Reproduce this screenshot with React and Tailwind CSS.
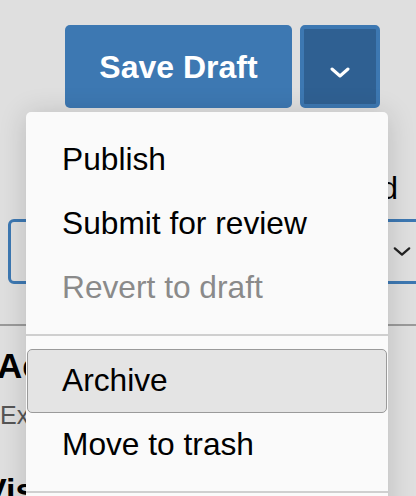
import React from 'react';

const Chevron = ({ className, color = '#fff', width = 3 }) => (
  <svg viewBox="0 0 20 11" className={className} fill="none">
    <polyline points="2,2 10,9 18,2" stroke={color} strokeWidth={width} strokeLinecap="round" strokeLinejoin="round" />
  </svg>
);

const MenuItem = ({ label, disabled, active }) => (
  <div
    className={`mx-[1px] h-[64px] flex items-center pl-[34px] rounded-[5px] border-[1.5px] text-[31.7px] ${
      active ? 'bg-[#e4e4e4] border-[#9a9a9a]' : 'border-transparent'
    } ${disabled ? 'text-[#8a8a8a]' : 'text-black'}`}
  >
    {label}
  </div>
);

export default function App() {
  return (
    <div
      className="relative w-[416px] h-[496px] overflow-hidden bg-[#dfdfdf]"
      style={{ fontFamily: '"Liberation Sans", Arial, sans-serif' }}
    >
      {/* Button group */}
      <div className="flex gap-[8px] pt-[25px] pl-[65px]">
        <button className="w-[227px] h-[83px] rounded-[5px] bg-[#3d78b2] text-white font-bold text-[32px]">
          Save Draft
        </button>
        <button className="w-[80px] h-[83px] rounded-[5px] bg-[#2f6092] border-[4px] border-[#3d78b2] flex items-center justify-center pt-[11px]">
          <Chevron className="w-[20px] h-[11px]" />
        </button>
      </div>

      {/* Page content behind the menu */}
      <div className="flex justify-end pr-[18px] mt-[62px] text-[32px] text-black leading-[36px]">
        Published
      </div>
      <div className="ml-[8px] mt-[13px] w-[420px] h-[65px] rounded-[6px] border-[3px] border-[#3d78b2] flex items-center justify-end pr-[14px]">
        <Chevron className="w-[18px] h-[11px]" color="#222" width={2.5} />
      </div>
      <div className="mt-[40px] h-[2px] bg-[#9a9a9a]" />
      <div className="-ml-[3px] mt-[20px] font-bold text-[35px] leading-[40px] text-black">Actions</div>
      <div className="mt-[14px] text-[25px] leading-[30px] text-[#555]">Expand</div>
      <div className="-ml-[16px] mt-[40px] font-bold text-[34px] leading-[40px] text-black">Visibility</div>

      {/* Dropdown menu */}
      <div className="absolute left-[26px] top-[112px] w-[362px] h-[420px] bg-[#fafafa] rounded-[5px] pt-[16px] shadow-[0_2px_28px_rgba(0,0,0,0.16)]">
        <MenuItem label="Publish" />
        <MenuItem label="Submit for review" />
        <MenuItem label="Revert to draft" disabled />
        <div className="mt-[14px] h-[2px] bg-[#cfcfcf]" />
        <div className="mt-[13px]">
          <MenuItem label="Archive" active />
        </div>
        <MenuItem label="Move to trash" />
        <div className="mt-[14px] h-[2px] bg-[#cfcfcf]" />
      </div>
    </div>
  );
}
